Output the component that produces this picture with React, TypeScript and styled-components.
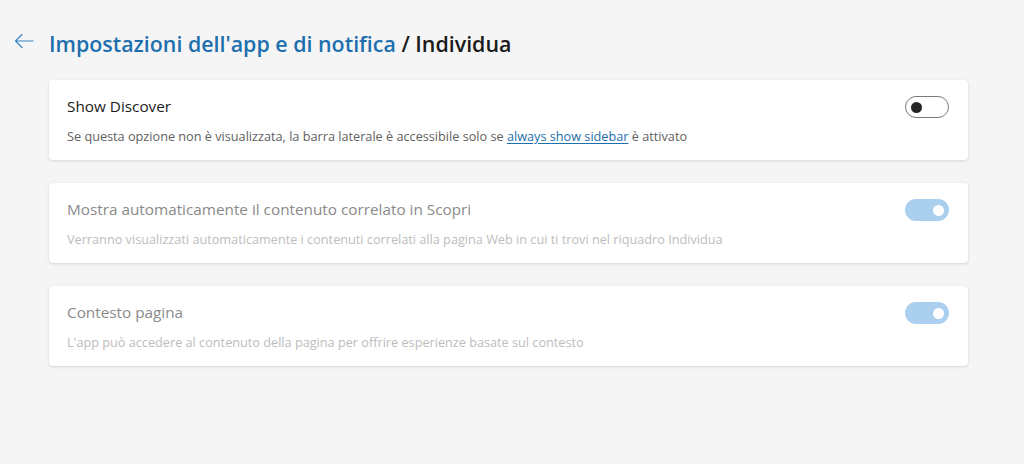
import React from "react";
import styled, { createGlobalStyle } from "styled-components";

const GlobalStyle = createGlobalStyle`
  html, body {
    margin: 0;
    padding: 0;
    background: #f5f5f5;
  }
  body {
    font-family: "Open Sans", "Noto Sans", sans-serif;
    color: #1b1b1b;
  }
`;

const settings = [
  {
    title: "Show Discover",
    checked: false,
    disabled: false,
    desc: (
      <>
        Se questa opzione non è visualizzata, la barra laterale è accessibile solo se{" "}
        <a href="#">always show sidebar</a> è attivato
      </>
    ),
  },
  {
    title: "Mostra automaticamente il contenuto correlato in Scopri",
    checked: true,
    disabled: true,
    desc: "Verranno visualizzati automaticamente i contenuti correlati alla pagina Web in cui ti trovi nel riquadro Individua",
  },
  {
    title: "Contesto pagina",
    checked: true,
    disabled: true,
    desc: "L'app può accedere al contenuto della pagina per offrire esperienze basate sul contesto",
  },
];

export default function App() {
  return (
    <Page>
      <GlobalStyle />
      <Header>
        <BackButton aria-label="Indietro">
          <svg width="20" height="16" viewBox="0 0 20 16" fill="none">
            <path
              d="M19 8H1.5M8 1.5L1.5 8L8 14.5"
              stroke="#3583c4"
              strokeWidth="1.1"
              strokeLinecap="round"
              strokeLinejoin="round"
            />
          </svg>
        </BackButton>
        <Title>
          <Crumb>Impostazioni dell'app e di notifica</Crumb> / Individua
        </Title>
      </Header>
      <List>
        {settings.map((s) => (
          <Card key={s.title}>
            <CardTop>
              <CardTitle $disabled={s.disabled}>{s.title}</CardTitle>
              <Toggle $on={s.checked} $disabled={s.disabled}>
                <Knob $on={s.checked} />
              </Toggle>
            </CardTop>
            <CardDesc $disabled={s.disabled}>{s.desc}</CardDesc>
          </Card>
        ))}
      </List>
    </Page>
  );
}

const Page = styled.div`
  width: 1024px;
  height: 464px;
  box-sizing: border-box;
  padding: 28px 0 0 0;
`;

const Header = styled.div`
  display: flex;
  align-items: center;
  height: 30px;
  padding-left: 14px;
`;

const BackButton = styled.button`
  border: 0;
  background: none;
  padding: 0;
  width: 20px;
  height: 20px;
  display: flex;
  align-items: center;
  justify-content: center;
  margin-right: 15px;
  margin-top: -4px;
  cursor: pointer;
`;

const Title = styled.h1`
  margin: 0;
  font-size: 21.4px;
  font-weight: 600;
  color: #1b1b1b;
`;

const Crumb = styled.span`
  color: #1d6fae;
`;

const List = styled.div`
  display: flex;
  flex-direction: column;
  gap: 23px;
  margin: 22px 0 0 49px;
  width: 919px;
`;

const Card = styled.div`
  background: #fff;
  border-radius: 4px;
  height: 80px;
  box-sizing: border-box;
  padding: 14px 18px 0 18px;
  box-shadow: 0 1px 3px rgba(0, 0, 0, 0.13), 0 0 1px rgba(0, 0, 0, 0.06);
`;

const CardTop = styled.div`
  display: flex;
  align-items: center;
  justify-content: space-between;
  height: 24px;
`;

const CardTitle = styled.div<{ $disabled: boolean }>`
  font-size: 15.3px;
  font-weight: 500;
  color: ${(p) => (p.$disabled ? "#8a8a8a" : "#1b1b1b")};
`;

const CardDesc = styled.div<{ $disabled: boolean }>`
  margin-top: 9px;
  font-size: 12.7px;
  color: ${(p) => (p.$disabled ? "#bdbdbd" : "#616161")};

  a {
    color: #1d6fae;
    text-decoration: underline;
    text-underline-offset: 2px;
  }
`;

const Toggle = styled.div<{ $on: boolean; $disabled: boolean }>`
  width: 44px;
  height: 22px;
  box-sizing: border-box;
  border-radius: 11px;
  margin-right: 1px;
  margin-top: 2px;
  display: flex;
  align-items: center;
  padding: 0 5px;
  justify-content: ${(p) => (p.$on ? "flex-end" : "flex-start")};
  background: ${(p) => (p.$on ? (p.$disabled ? "#abcfee" : "#0f6cbd") : "#fff")};
  border: ${(p) => (p.$on ? "none" : "1px solid #7a7a7a")};
`;

const Knob = styled.span<{ $on: boolean }>`
  width: 11px;
  height: 11px;
  border-radius: 50%;
  background: ${(p) => (p.$on ? "#fff" : "#242424")};
`;
